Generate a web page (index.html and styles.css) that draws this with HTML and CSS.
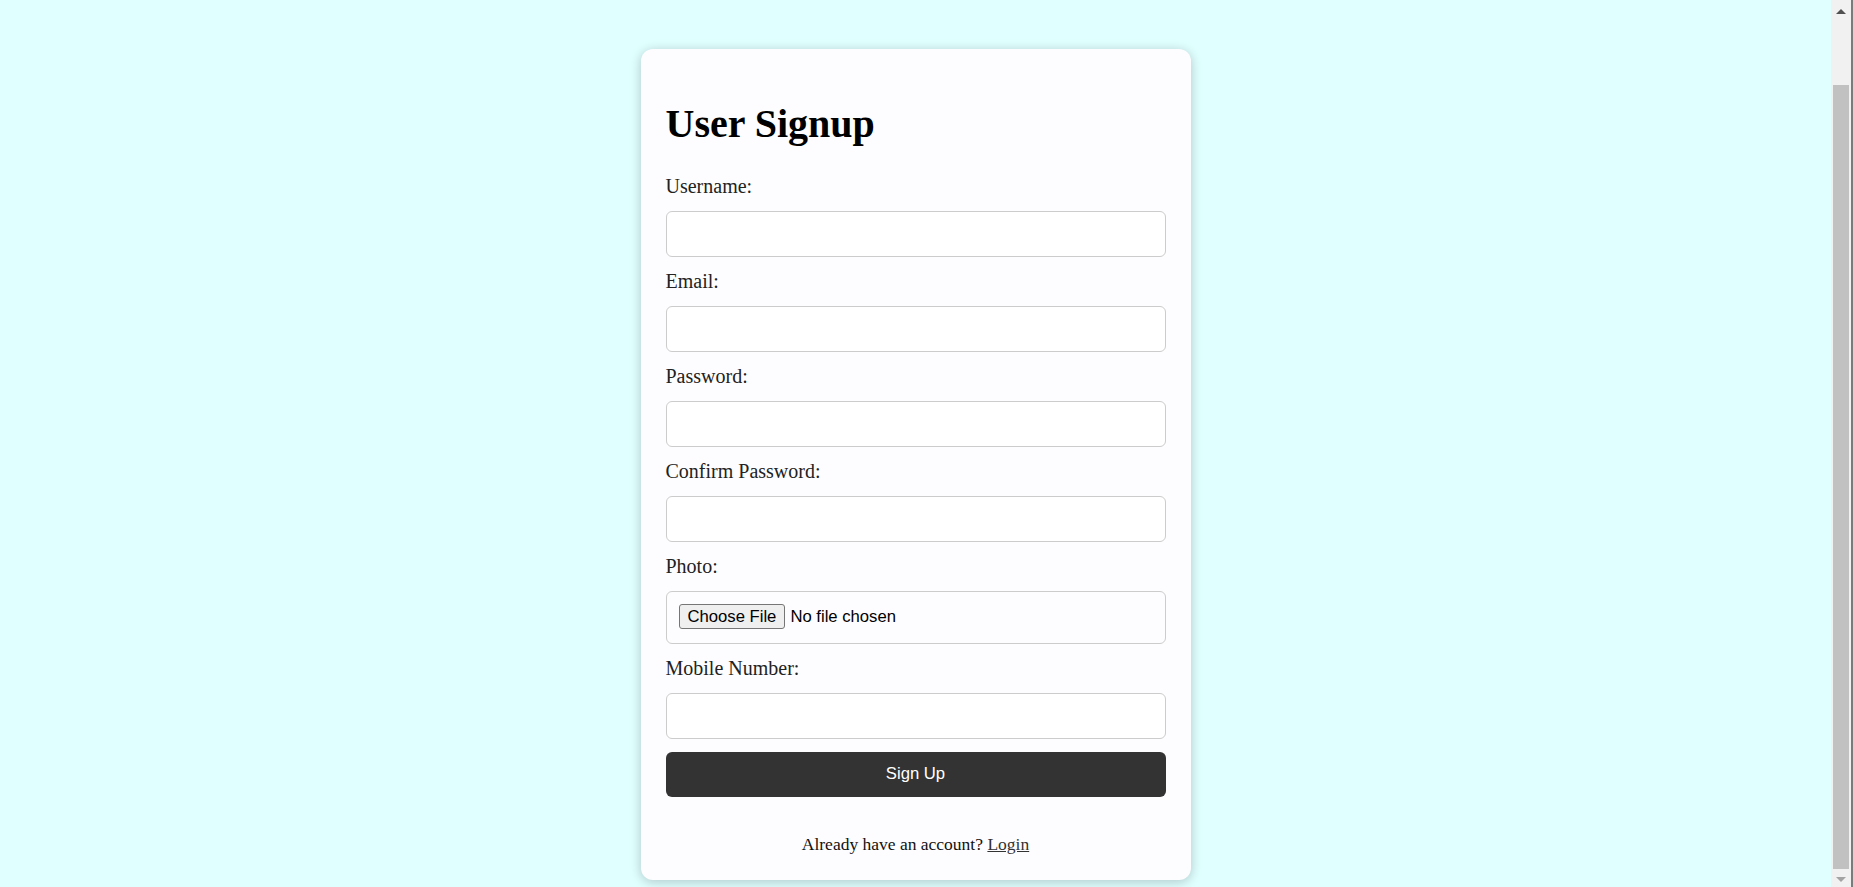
FILE: index.html
```html
<!DOCTYPE html>
<html lang="en">
<head>
<meta charset="utf-8">
<title>User Signup</title>
<link rel="stylesheet" href="styles.css">
</head>
<body>
  <div class="card">
    <h1 class="title">User Signup</h1>
    <form class="form">
      <label class="label" for="username">Username:</label>
      <input class="field" type="text" id="username">
      <label class="label" for="email">Email:</label>
      <input class="field" type="email" id="email">
      <label class="label" for="password">Password:</label>
      <input class="field" type="password" id="password">
      <label class="label" for="confirm">Confirm Password:</label>
      <input class="field" type="password" id="confirm">
      <label class="label" for="photo">Photo:</label>
      <input class="field file" type="file" id="photo">
      <label class="label" for="mobile">Mobile Number:</label>
      <input class="field" type="tel" id="mobile">
      <button class="submit" type="button">Sign Up</button>
    </form>
    <p class="footer">Already have an account? <a class="link" href="#">Login</a></p>
  </div>
  <div class="scrollbar" aria-hidden="true">
    <span class="arrow arrow-up"></span>
    <span class="thumb"></span>
    <span class="arrow arrow-down"></span>
  </div>
  <script src="script.js"></script>
</body>
</html>
```

FILE: styles.css
```css
html, body {
  margin: 0;
}
html {
  scrollbar-width: none;
}
html::-webkit-scrollbar {
  display: none;
}
body {
  background: #e0ffff;
  font-family: "Liberation Serif", "Times New Roman", serif;
  padding: 125px 22px 7px 0;
}
.card {
  width: 550px;
  box-sizing: border-box;
  margin: 0 auto;
  padding: 25px;
  background: #fdfdff;
  border-radius: 12px;
  box-shadow: 0 2px 12px rgba(0, 0, 0, 0.22);
}
.title {
  font-size: 40px;
  line-height: 44px;
  font-weight: bold;
  margin: 28px 0 29px;
  color: #000;
}
.form {
  display: flex;
  flex-direction: column;
}
.label {
  display: block;
  font-size: 20px;
  line-height: 22px;
  color: #222;
  margin-bottom: 13.5px;
}
.field {
  box-sizing: border-box;
  width: 100%;
  height: 46px;
  padding: 12px;
  margin: 0 0 13.5px;
  border: 1px solid #cccccc;
  border-radius: 6px;
  background: #ffffff;
  font-family: "Liberation Sans", Arial, sans-serif;
  font-size: 16.67px;
  color: #000;
}
.file {
  height: 53px;
  padding: 12.5px 12px;
  background: #fdfdff;
}
.file::file-selector-button {
  font-family: "Liberation Sans", Arial, sans-serif;
  font-size: 16.67px;
  height: 25px;
  padding: 0 8px;
  margin: 0 5px 0 0;
  background: #efefef;
  border: 1px solid #767676;
  border-radius: 3px;
  color: #000;
}
.submit {
  height: 44.5px;
  margin-top: 0;
  border: none;
  border-radius: 6px;
  background: #333333;
  color: #ffffff;
  font-family: "Liberation Sans", Arial, sans-serif;
  font-size: 16.67px;
}
.footer {
  margin: 38.5px 0 0;
  text-align: center;
  font-size: 17.5px;
  line-height: 19.5px;
  color: #111;
}
.link {
  color: #333;
}

/* browser scrollbar overlay */
.scrollbar {
  position: fixed;
  top: 0;
  right: 0;
  width: 22px;
  height: 100%;
  box-sizing: border-box;
  background: #f1f1f1;
  border-right: 2px solid #7b7b7b;
}
.thumb {
  position: absolute;
  top: 85px;
  bottom: 18px;
  left: 2px;
  width: 16px;
  background: #c1c1c1;
}
.arrow {
  position: absolute;
  left: 5px;
  width: 0;
  height: 0;
  border-left: 5px solid transparent;
  border-right: 5px solid transparent;
}
.arrow-up {
  top: 9px;
  border-bottom: 5px solid #505050;
}
.arrow-down {
  bottom: 5px;
  border-top: 5px solid #a3a3a3;
}
```

FILE: script.js
```js
window.scrollTo(0, document.documentElement.scrollHeight);
```
